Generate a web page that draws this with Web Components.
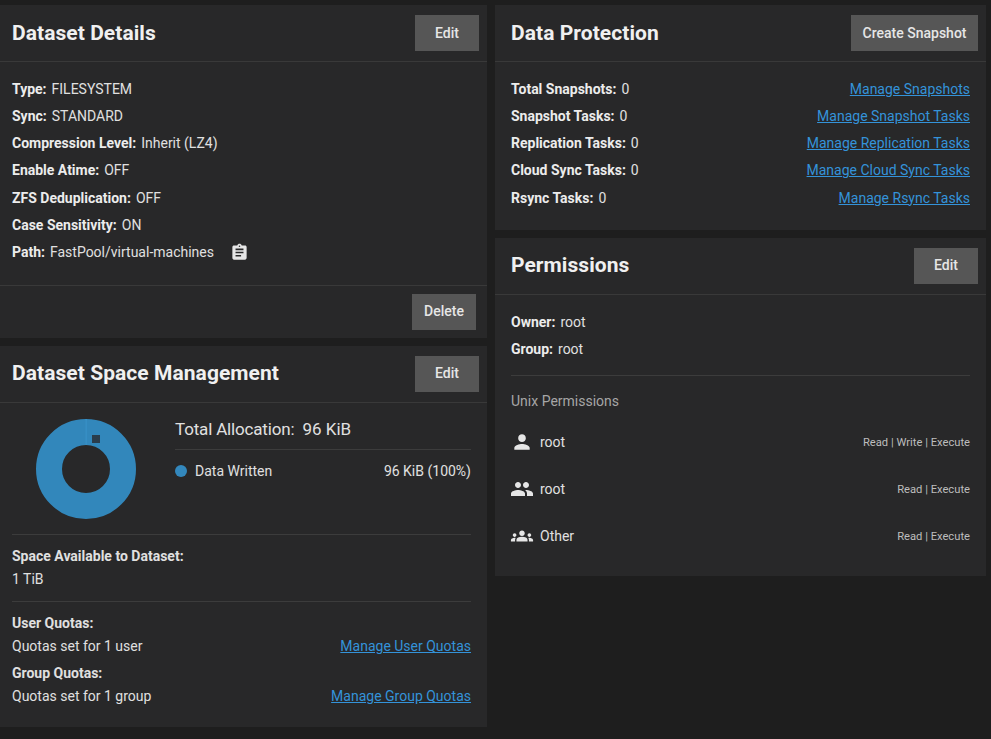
<!DOCTYPE html>
<html>
<head>
<meta charset="utf-8">
<title>Dataset</title>
<style>
  html, body { margin: 0; height: 100%; background: #1e1e1e; overflow: hidden; }
  body { font-family: Roboto, "Liberation Sans", sans-serif; font-size: 14px; color: #e0e0e0; }
</style>
</head>
<body>
<dataset-page>
  <info-card slot="left" title="Dataset Details" action="Edit" footer="Delete" style="--body-pad: 13.2px 16px 19.8px">
    <kv-row label="Type" value="FILESYSTEM"></kv-row>
    <kv-row label="Sync" value="STANDARD"></kv-row>
    <kv-row label="Compression Level" value="Inherit (LZ4)"></kv-row>
    <kv-row label="Enable Atime" value="OFF"></kv-row>
    <kv-row label="ZFS Deduplication" value="OFF"></kv-row>
    <kv-row label="Case Sensitivity" value="ON"></kv-row>
    <kv-row label="Path" value="FastPool/virtual-machines"><copy-icon></copy-icon></kv-row>
  </info-card>
  <info-card slot="left" title="Dataset Space Management" action="Edit" style="--body-pad: 16px 16px 19px; --shift: 1px; --btn-shift: 2px">
    <space-chart></space-chart>
    <rule-line style="--rule-top: 15px"></rule-line>
    <stack-row label="Space Available to Dataset:" value="1 TiB" style="--stack-top: 10px"></stack-row>
    <rule-line style="--rule-top: 10px"></rule-line>
    <stack-row label="User Quotas:" value="Quotas set for 1 user" link="Manage User Quotas" style="--stack-top: 10px"></stack-row>
    <stack-row label="Group Quotas:" value="Quotas set for 1 group" link="Manage Group Quotas" style="--stack-top: 4px"></stack-row>
  </info-card>
  <info-card slot="right" title="Data Protection" action="Create Snapshot" style="--body-pad: 13.2px 16px 18.8px">
    <kv-row label="Total Snapshots" value="0" link="Manage Snapshots"></kv-row>
    <kv-row label="Snapshot Tasks" value="0" link="Manage Snapshot Tasks"></kv-row>
    <kv-row label="Replication Tasks" value="0" link="Manage Replication Tasks"></kv-row>
    <kv-row label="Cloud Sync Tasks" value="0" link="Manage Cloud Sync Tasks"></kv-row>
    <kv-row label="Rsync Tasks" value="0" link="Manage Rsync Tasks"></kv-row>
  </info-card>
  <info-card slot="right" title="Permissions" action="Edit" style="--body-pad: 13px 16px 17px; --shift: 1px; --btn-shift: 1px">
    <kv-row label="Owner" value="root"></kv-row>
    <kv-row label="Group" value="root"></kv-row>
    <rule-line style="--rule-top: 13px"></rule-line>
    <div style="color:#a6a6a6;line-height:18px;margin:16px 0 8px">Unix Permissions</div>
    <perm-row icon="user" name="root" access="Read | Write | Execute"></perm-row>
    <perm-row icon="group" name="root" access="Read | Execute"></perm-row>
    <perm-row icon="other" name="Other" access="Read | Execute"></perm-row>
  </info-card>
</dataset-page>

<script>
const ICONS = {
  user: ['-0.5 -0.5 25 25', 'M12 12c2.21 0 4-1.79 4-4s-1.79-4-4-4-4 1.79-4 4 1.79 4 4 4zm0 2c-2.67 0-8 1.34-8 4v2h16v-2c0-2.66-5.33-4-8-4z'],
  group: ['0 0 24 24', 'M16 11c1.66 0 2.99-1.34 2.99-3S17.66 5 16 5c-1.66 0-3 1.34-3 3s1.34 3 3 3zm-8 0c1.66 0 2.99-1.34 2.99-3S9.66 5 8 5C6.34 5 5 6.34 5 8s1.34 3 3 3zm0 2c-2.33 0-7 1.17-7 3.5V19h14v-2.5c0-2.33-4.67-3.5-7-3.5zm8 0c-.29 0-.62.02-.97.05 1.16.84 1.97 1.97 1.97 3.45V19h6v-2.5c0-2.33-4.67-3.5-7-3.5z'],
  other: ['-1 -1 26 26', 'M12 12.75c1.63 0 3.07.39 4.24.9 1.08.48 1.76 1.56 1.76 2.73V18H6v-1.61c0-1.18.68-2.26 1.76-2.73 1.17-.52 2.61-.91 4.24-.91zM4 13c1.1 0 2-.9 2-2s-.9-2-2-2-2 .9-2 2 .9 2 2 2zm1.13 1.1c-.37-.06-.74-.1-1.13-.1-.99 0-1.93.21-2.78.58C.48 14.9 0 15.62 0 16.43V18h4.5v-1.61c0-.83.23-1.61.63-2.29zM20 13c1.1 0 2-.9 2-2s-.9-2-2-2-2 .9-2 2 .9 2 2 2zm4 3.43c0-.81-.48-1.53-1.22-1.85-.85-.37-1.79-.58-2.78-.58-.39 0-.76.04-1.13.1.4.68.63 1.46.63 2.29V18H24v-1.57zM12 6c1.66 0 3 1.34 3 3s-1.34 3-3 3-3-1.34-3-3 1.34-3 3-3z']
};

class DatasetPage extends HTMLElement {
  constructor () {
    super();
    this.attachShadow({mode: 'open'}).innerHTML = `
      <style>
        :host { display: flex; gap: 8px; padding-top: 5px; margin-left: -4px; width: 990px; }
        .col { display: flex; flex-direction: column; gap: 8px; width: 491px; flex: none; }
      </style>
      <div class="col"><slot name="left"></slot></div>
      <div class="col"><slot name="right"></slot></div>`;
  }
}

class InfoCard extends HTMLElement {
  constructor () {
    super();
    const footer = this.getAttribute('footer');
    this.attachShadow({mode: 'open'}).innerHTML = `
      <style>
        :host { display: block; background: #282829; }
        header { display: flex; justify-content: space-between; align-items: center; height: 56px; padding: 0 8px 0 16px; border-bottom: 1px solid #393939; }
        h2 { margin: 0; padding-bottom: calc(2 * var(--shift, 0px)); font-size: 21px; font-weight: 700; letter-spacing: 0.06px; color: #f0f0f0; }
        .body { padding: var(--body-pad, 16px); }
        footer { --btn-shift: 2px; display: flex; justify-content: flex-end; height: 53px; box-sizing: border-box; padding: 8px 11px 0 0; border-top: 1px solid #393939; }
      </style>
      <header><h2>${this.getAttribute('title')}</h2><card-button>${this.getAttribute('action')}</card-button></header>
      <div class="body"><slot></slot></div>
      ${footer ? `<footer><card-button>${footer}</card-button></footer>` : ''}`;
    this.removeAttribute('title');
  }
}

class CardButton extends HTMLElement {
  constructor () {
    super();
    this.attachShadow({mode: 'open'}).innerHTML = `
      <style>
        :host { display: inline-flex; align-items: center; justify-content: center; box-sizing: border-box; min-width: 64px; height: 36px; padding: 0 11.5px var(--btn-shift, 0); background: #565656; color: #e6e6e6; font-size: 14px; font-weight: 500; }
      </style>
      <slot></slot>`;
  }
}

class KvRow extends HTMLElement {
  constructor () {
    super();
    const link = this.getAttribute('link');
    this.attachShadow({mode: 'open'}).innerHTML = `
      <style>
        :host { display: flex; align-items: center; height: 27.2px; }
        b { font-weight: 700; color: #ececec; margin-right: 5px; }
        a { margin-left: auto; color: #3493d9; text-decoration: underline; }
      </style>
      <b>${this.getAttribute('label')}:</b><span>${this.getAttribute('value')}</span><slot></slot>
      ${link ? `<a>${link}</a>` : ''}`;
  }
}

class CopyIcon extends HTMLElement {
  constructor () {
    super();
    this.attachShadow({mode: 'open'}).innerHTML = `
      <style>
        :host { display: inline-flex; margin: 1px 0 0 16px; }
        svg { width: 19px; height: 19px; fill: #e6e6e6; display: block; }
      </style>
      <svg viewBox="0 0 24 24"><path d="M19 3h-4.18C14.4 1.84 13.3 1 12 1c-1.3 0-2.4.84-2.82 2H5c-1.1 0-2 .9-2 2v14c0 1.1.9 2 2 2h14c1.1 0 2-.9 2-2V5c0-1.1-.9-2-2-2zm-7 0c.55 0 1 .45 1 1s-.45 1-1 1-1-.45-1-1 .45-1 1-1zm2 14H7v-2h7v2zm3-4H7v-2h10v2zm0-4H7V7h10v2z"/></svg>`;
  }
}

class RuleLine extends HTMLElement {
  constructor () {
    super();
    this.attachShadow({mode: 'open'}).innerHTML = `
      <style>
        :host { display: block; height: 1px; background: #3c3c3c; margin-top: var(--rule-top, 0); }
      </style>`;
  }
}

class StackRow extends HTMLElement {
  constructor () {
    super();
    const link = this.getAttribute('link');
    this.attachShadow({mode: 'open'}).innerHTML = `
      <style>
        :host { display: block; padding-top: var(--stack-top, 0); }
        b { display: block; height: 23px; line-height: 23px; font-weight: 700; color: #e0e0e0; }
        .line { display: flex; justify-content: space-between; height: 23px; line-height: 23px; }
        a { color: #3493d9; text-decoration: underline; }
      </style>
      <b>${this.getAttribute('label')}</b>
      <div class="line"><span>${this.getAttribute('value')}</span>${link ? `<a>${link}</a>` : ''}</div>`;
  }
}

class SpaceChart extends HTMLElement {
  constructor () {
    super();
    this.attachShadow({mode: 'open'}).innerHTML = `
      <style>
        :host { display: flex; padding-left: 24px; }
        svg { width: 100px; height: 100px; flex: none; display: block; }
        .info { flex: 1; margin-left: 39px; }
        .total { font-size: 17px; height: 30px; line-height: 20px; border-bottom: 1px solid #3c3c3c; letter-spacing: -0.17px; }
        .total span { margin-left: 4px; letter-spacing: 0; }
        .legend { display: flex; align-items: center; margin-top: 11px; height: 20px; }
        i { width: 12px; height: 12px; border-radius: 50%; background: #3388bd; margin-right: 8px; }
        .pct { margin-left: auto; }
      </style>
      <svg viewBox="0 0 100 100">
        <circle cx="50" cy="50" r="37" fill="none" stroke="#3287bb" stroke-width="26"/>
        <rect x="49.5" y="0" width="1.4" height="26" fill="#378fc6"/>
        <rect x="56" y="16" width="8" height="8" fill="#2a3d4c"/>
      </svg>
      <div class="info">
        <div class="total">Total Allocation: <span>96 KiB</span></div>
        <div class="legend"><i></i>Data Written<span class="pct">96 KiB (100%)</span></div>
      </div>`;
  }
}

class PermRow extends HTMLElement {
  constructor () {
    super();
    const [box, d] = ICONS[this.getAttribute('icon')];
    this.attachShadow({mode: 'open'}).innerHTML = `
      <style>
        :host { display: flex; align-items: center; height: 47px; margin-left: -1px; }
        svg { width: 24px; height: 24px; fill: #e6e6e6; margin-right: 6px; flex: none; }
        small { margin-left: auto; padding-top: 1px; font-size: 11.2px; color: #bdbdbd; }
      </style>
      <svg viewBox="${box}"><path d="${d}"/></svg>
      <span>${this.getAttribute('name')}</span>
      <small>${this.getAttribute('access')}</small>`;
  }
}

customElements.define('dataset-page', DatasetPage);
customElements.define('info-card', InfoCard);
customElements.define('card-button', CardButton);
customElements.define('kv-row', KvRow);
customElements.define('copy-icon', CopyIcon);
customElements.define('rule-line', RuleLine);
customElements.define('stack-row', StackRow);
customElements.define('space-chart', SpaceChart);
customElements.define('perm-row', PermRow);
</script>
</body>
</html>
